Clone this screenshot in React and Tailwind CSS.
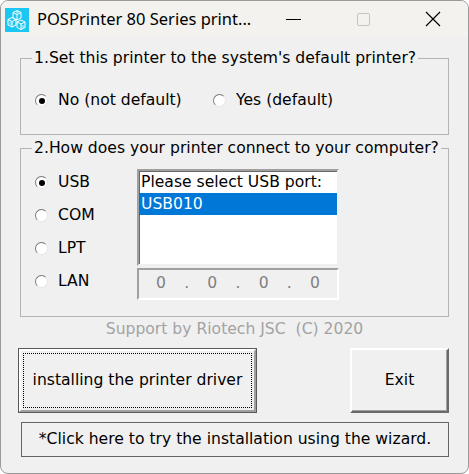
import React, { useState } from 'react';

const ui = { fontFamily: '"DejaVu Sans", Tahoma, sans-serif' };
const title = { fontFamily: '"Noto Sans", "Open Sans", sans-serif' };

// classic Win32 radio button
const Radio = ({ checked, label, onClick }) => (
    <div className="flex items-center h-[19px] cursor-default" onClick={onClick}>
        <span className="relative w-[13px] h-[13px] rounded-full bg-white border border-t-[#7a7a7a] border-l-[#7a7a7a] border-b-[#e6e6e6] border-r-[#e6e6e6] flex items-center justify-center">
            {checked && <span className="w-[6px] h-[6px] rounded-full bg-black" />}
        </span>
        <span className="ml-[10px] text-[15.6px] leading-[19px] text-black whitespace-nowrap">{label}</span>
    </div>
);

const AppIcon = () => (
    <svg width="24" height="24" viewBox="0 0 24 24">
        <rect width="24" height="24" fill="#1cc6f3" />
        <g fill="none" stroke="#ffffff" strokeWidth="1">
            <path d="M8 4.5 L12 2.5 L16 4.5 L16 10 L12 12 L8 10 Z M8 4.5 L12 6.5 L16 4.5 M12 6.5 L12 12" />
            <path d="M3 11.5 L7 9.5 L11 11.5 L11 17 L7 19 L3 17 Z M3 11.5 L7 13.5 L11 11.5 M7 13.5 L7 19" />
            <path d="M12 14 L16 12 L20 14 L20 19.5 L16 21.5 L12 19.5 Z M12 14 L16 16 L20 14 M16 16 L16 21.5" />
        </g>
        <text x="11" y="5.5" fontSize="4" fill="#fff" fontFamily="DejaVu Sans">P</text>
        <text x="4" y="16.5" fontSize="4" fill="#fff" fontFamily="DejaVu Sans">O</text>
        <text x="16.5" y="19.5" fontSize="4" fill="#fff" fontFamily="DejaVu Sans">S</text>
    </svg>
);

const App = () => {
    const [isDefault, setIsDefault] = useState(false);
    const [port, setPort] = useState('USB');

    return (
        <div className="w-[469px] h-[474px] bg-[#f0f0f0] border border-[#9a9a9a] rounded-t-[8px] rounded-b-[8px] overflow-hidden flex flex-col" style={ui}>

            {/* ── Title bar ───────────────────────────── */}
            <div className="h-[36px] bg-[#f3f2ee] flex items-center flex-shrink-0">
                <div className="ml-[4px] mt-[2px]"><AppIcon /></div>
                <span className="ml-[8px] text-[16.5px] text-black whitespace-nowrap" style={title}>POSPrinter 80 Series print...</span>
                <div className="flex-1" />
                <div className="w-[70px] flex justify-center">
                    <span className="w-[15px] h-[1px] bg-black" />
                </div>
                <div className="w-[70px] flex justify-center">
                    <span className="w-[13px] h-[13px] border border-[#c4c4c4] rounded-[2px]" />
                </div>
                <div className="w-[70px] flex justify-center">
                    <svg width="16" height="16" viewBox="0 0 16 16">
                        <path d="M1 1 L15 15 M15 1 L1 15" stroke="#000" strokeWidth="1.2" fill="none" />
                    </svg>
                </div>
            </div>

            {/* ── Body ───────────────────────────────── */}
            <div className="flex flex-col px-[19px] pt-[12px] text-[15.6px]">

                {/* Group 1 */}
                <fieldset className="border border-[#b4b4b4]">
                    <legend className="ml-[11px] px-[2px] leading-[19px] text-black whitespace-nowrap">
                        1.Set this printer to the system's default printer?
                    </legend>
                    <div className="flex items-center pl-[14px] mt-[23px] mb-[24px]">
                        <div className="w-[178px]">
                            <Radio checked={!isDefault} label="No (not default)" onClick={() => setIsDefault(false)} />
                        </div>
                        <Radio checked={isDefault} label="Yes (default)" onClick={() => setIsDefault(true)} />
                    </div>
                </fieldset>

                {/* Group 2 */}
                <fieldset className="border border-[#b4b4b4] mt-[4px]">
                    <legend className="ml-[11px] px-[2px] leading-[19px] text-black whitespace-nowrap">
                        2.How does your printer connect to your computer?
                    </legend>
                    <div className="flex pl-[14px] pt-[11px] pb-[16px]">
                        <div className="w-[102px] flex flex-col gap-[14px] pt-[4px]">
                            {['USB', 'COM', 'LPT', 'LAN'].map((p) => (
                                <Radio key={p} checked={port === p} label={p} onClick={() => setPort(p)} />
                            ))}
                        </div>
                        <div className="flex flex-col w-[202px]">
                            <div className="h-[97px] bg-white border-2 border-t-[#a0a0a0] border-l-[#a0a0a0] border-b-[#f0f0f0] border-r-[#f0f0f0] shadow-[inset_1px_1px_0_#696969]">
                                <div className="pl-[2px] pt-[1px] leading-[21px] text-black whitespace-nowrap">Please select USB port:</div>
                                <div className="pl-[2px] h-[22px] leading-[22px] bg-[#0078d7] text-white">USB010</div>
                            </div>
                            <div className="mt-[2px] h-[32px] border-2 border-t-[#a0a0a0] border-l-[#a0a0a0] border-b-[#ffffff] border-r-[#ffffff] flex items-center justify-around px-[8px] text-[#808080]">
                                <span>0</span><span>.</span><span>0</span><span>.</span><span>0</span><span>.</span><span>0</span>
                            </div>
                        </div>
                    </div>
                </fieldset>

                {/* Credits */}
                <div className="mt-[3px] text-center leading-[19px] text-[#a3a3a3]">
                    Support by Riotech JSC&nbsp; (C) 2020
                </div>

                {/* Buttons */}
                <div className="mt-[9px] flex justify-between -ml-[2px]">
                    <button className="w-[239px] h-[65px] border border-[#5a5a5a] bg-[#f0f0f0] p-0">
                        <div className="w-full h-full border-2 border-t-white border-l-white border-b-[#a0a0a0] border-r-[#a0a0a0] p-[2px]">
                            <div className="w-full h-full border border-dotted border-black flex items-center justify-center text-black">
                                installing the printer driver
                            </div>
                        </div>
                    </button>
                    <button className="w-[99px] h-[65px] bg-[#f0f0f0] border-2 border-t-white border-l-white border-b-[#696969] border-r-[#696969] shadow-[inset_-1px_-1px_0_#a0a0a0] flex items-center justify-center text-black">
                        Exit
                    </button>
                </div>

                {/* Wizard link */}
                <button className="mt-[9px] ml-[1px] h-[35px] border border-[#646464] bg-[#f0f0f0] flex items-center justify-center text-black whitespace-nowrap">
                    *Click here to try the installation using the wizard.
                </button>
            </div>
        </div>
    );
};

export default App;
